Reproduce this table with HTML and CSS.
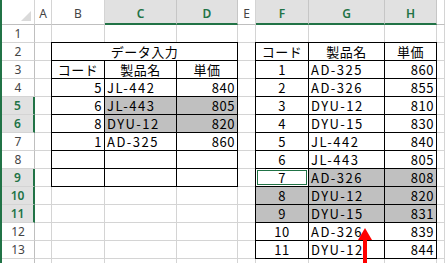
FILE: index.html
```html
<!DOCTYPE html>
<html lang="ja">
<head>
    <meta charset="UTF-8">
    <meta name="viewport" content="width=device-width, initial-scale=1.0">
    <title>データ入力</title>
    <link rel="stylesheet" href="styles.css">
</head>
<body>
    <div class="sheet">
        <!-- column headers -->
        <div class="corner"></div>
        <div class="col-head">A</div>
        <div class="col-head">B</div>
        <div class="col-head sel">C</div>
        <div class="col-head sel">D</div>
        <div class="col-head">E</div>
        <div class="col-head sel">F</div>
        <div class="col-head sel">G</div>
        <div class="col-head sel">H</div>
        <div class="col-head"></div>

        <!-- row headers -->
        <div class="row-heads">
            <div class="row-head">1</div>
            <div class="row-head">2</div>
            <div class="row-head">3</div>
            <div class="row-head">4</div>
            <div class="row-head sel">5</div>
            <div class="row-head sel">6</div>
            <div class="row-head">7</div>
            <div class="row-head">8</div>
            <div class="row-head sel">9</div>
            <div class="row-head sel">10</div>
            <div class="row-head sel">11</div>
            <div class="row-head">12</div>
            <div class="row-head">13</div>
        </div>

        <!-- empty grid behind the tables -->
        <div class="cols">
            <div class="col"></div>
            <div class="col"></div>
            <div class="col"></div>
            <div class="col"></div>
            <div class="col"></div>
            <div class="col"></div>
            <div class="col"></div>
            <div class="col"></div>
            <div class="col"></div>
        </div>

        <!-- B2:D9 -->
        <div class="table input-table">
            <div class="cell c title">データ入力</div>
            <div class="cell c">コード</div><div class="cell c">製品名</div><div class="cell c">単価</div>
            <div class="cell r">5</div><div class="cell name">JL-442</div><div class="cell r">840</div>
            <div class="cell r">6</div><div class="cell name gray">JL-443</div><div class="cell r gray">805</div>
            <div class="cell r">8</div><div class="cell name gray">DYU-12</div><div class="cell r gray">820</div>
            <div class="cell r">1</div><div class="cell name">AD-325</div><div class="cell r">860</div>
            <div class="cell"></div><div class="cell"></div><div class="cell"></div>
            <div class="cell"></div><div class="cell"></div><div class="cell"></div>
        </div>

        <!-- F2:H13 -->
        <div class="table list-table">
            <div class="cell c">コード</div><div class="cell c">製品名</div><div class="cell c">単価</div>
            <div class="cell c">1</div><div class="cell name">AD-325</div><div class="cell r">860</div>
            <div class="cell c">2</div><div class="cell name">AD-326</div><div class="cell r">855</div>
            <div class="cell c">3</div><div class="cell name">DYU-12</div><div class="cell r">810</div>
            <div class="cell c">4</div><div class="cell name">DYU-15</div><div class="cell r">830</div>
            <div class="cell c">5</div><div class="cell name">JL-442</div><div class="cell r">840</div>
            <div class="cell c">6</div><div class="cell name">JL-443</div><div class="cell r">805</div>
            <div class="cell c active">7</div><div class="cell name gray">AD-326</div><div class="cell r gray">808</div>
            <div class="cell c gray">8</div><div class="cell name gray">DYU-12</div><div class="cell r gray">820</div>
            <div class="cell c gray">9</div><div class="cell name gray">DYU-15</div><div class="cell r gray">831</div>
            <div class="cell c">10</div><div class="cell name">AD-326</div><div class="cell r">839</div>
            <div class="cell c">11</div><div class="cell name">DYU-12</div><div class="cell r">844</div>
        </div>

        <svg class="arrow" width="16" height="35" viewBox="0 0 16 35">
            <polygon points="8,0 1,12 15,12" fill="#ff0000"/>
            <rect x="6" y="11" width="4" height="24" fill="#ff0000"/>
        </svg>
    </div>
</body>
</html>
```

FILE: styles.css
```css
body {
    margin: 0;
    padding: 0;
    background-color: #fff;
    overflow: hidden;
}

.sheet {
    position: relative;
    height: 263px;
    border-left: 2px solid #217346;
    display: grid;
    grid-template-columns: 33px 17px 53px 72px 61px 18px 53px 76px 52px 1fr;
    grid-template-rows: 25px repeat(13, 18px) 1fr;
}

/* headers */
.corner {
    position: relative;
    border-right: 1px solid #d4d4d4;
    border-bottom: 1px solid #bfbfbf;
}

.corner::after {
    content: "";
    position: absolute;
    right: 3px;
    bottom: 3px;
    border-left: 10px solid transparent;
    border-bottom: 10px solid #dadada;
}

.col-head {
    box-sizing: border-box;
    border-right: 1px solid #d4d4d4;
    border-bottom: 1px solid #bfbfbf;
    padding-top: 6px;
    font-family: "Noto Sans", sans-serif;
    font-size: 12px;
    line-height: 16px;
    text-align: center;
    color: #444;
}

.col-head.sel {
    background-color: #e1e1e1;
    border-right-color: #c6c6c6;
    border-bottom: 2px solid #217346;
    color: #217346;
    font-weight: 600;
}

.row-heads {
    grid-column: 1;
    grid-row: 2 / -1;
    display: flex;
    flex-direction: column;
    border-right: 1px solid #bfbfbf;
}

.row-head {
    box-sizing: border-box;
    flex: 0 0 18px;
    margin-right: -1px;
    border-right: 1px solid #bfbfbf;
    border-bottom: 1px solid #d4d4d4;
    padding-top: 1px;
    font-family: "Noto Sans", sans-serif;
    font-size: 12px;
    line-height: 16px;
    text-align: center;
    color: #444;
}

.row-head.sel {
    background-color: #e1e1e1;
    border-right: 2px solid #217346;
    color: #217346;
    font-weight: 600;
}

/* blank cells */
.cols {
    grid-column: 2 / -1;
    grid-row: 2 / -1;
    display: grid;
    grid-template-columns: 17px 53px 72px 61px 18px 53px 76px 52px 1fr;
}

.col {
    border-right: 1px solid #d4d4d4;
    background: repeating-linear-gradient(to bottom, transparent 0 17px, #d4d4d4 17px 18px);
}

/* bordered tables */
.table {
    margin: -1px 0 0 -1px;
    border-left: 1px solid #000;
    border-top: 1px solid #000;
    display: grid;
    grid-auto-rows: 18px;
    font-family: "Noto Sans CJK JP", sans-serif;
    font-size: 13px;
    letter-spacing: 0.5px;
    color: #000;
}

.input-table {
    grid-column: 3 / 6;
    grid-row: 3 / 11;
    grid-template-columns: 53px 72px 61px;
}

.list-table {
    grid-column: 7 / 10;
    grid-row: 3 / 15;
    grid-template-columns: 53px 76px 52px;
}

.cell {
    box-sizing: border-box;
    border-right: 1px solid #000;
    border-bottom: 1px solid #000;
    padding: 1px 3px 0;
    line-height: 16px;
    white-space: nowrap;
    background-color: #fff;
}

.cell.name {
    padding-left: 2px;
    letter-spacing: 1.5px;
}

.cell.c {
    text-align: center;
}

.cell.r {
    text-align: right;
    padding-right: 2px;
}

.cell.title {
    grid-column: 1 / 4;
}

.cell.gray {
    background-color: #c0c0c0;
}

.cell.active {
    box-shadow: inset 0 0 0 1px #fff, inset 0 0 0 2px #217346;
}

.arrow {
    position: absolute;
    left: 355px;
    top: 228px;
}
```
